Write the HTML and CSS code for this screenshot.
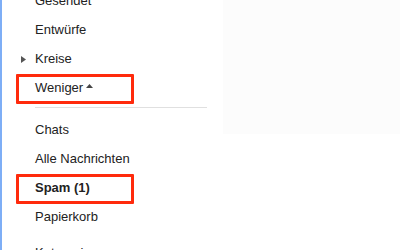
FILE: index.html
```html
<!DOCTYPE html>
<html>
<head>
<meta charset="utf-8">
<link rel="stylesheet" href="styles.css">
</head>
<body>
<div class="page">
  <div class="stripe"></div>
  <nav class="nav">
    <div class="item">Gesendet</div>
    <div class="item">Entwürfe</div>
    <div class="item"><svg class="expand" width="5" height="7" viewBox="0 0 5 7"><path d="M0 0L5 3.5L0 7Z" fill="#555"/></svg>Kreise</div>
    <div class="item marked">Weniger<svg class="caret" width="7" height="4" viewBox="0 0 7 4"><path d="M0 4L3.5 0L7 4Z" fill="#444"/></svg></div>
    <div class="sep"></div>
    <div class="item">Chats</div>
    <div class="item">Alle Nachrichten</div>
    <div class="item marked bold">Spam (1)</div>
    <div class="item">Papierkorb</div>
    <div class="item section">Kategorien</div>
  </nav>
  <div class="main">
    <div class="panel"></div>
  </div>
</div>
</body>
</html>
```
FILE: styles.css
```css
html, body {
  margin: 0;
  padding: 0;
  background: #fff;
  overflow: hidden;
}
.page {
  display: flex;
  width: 400px;
  height: 250px;
  overflow: hidden;
  font-family: "Liberation Sans", Arial, sans-serif;
  font-size: 13px;
  color: #222;
}
.stripe {
  width: 2px;
  flex: none;
  background: #7eaef6;
}
.nav {
  width: 221px;
  flex: none;
  margin-top: -14px;
}
.item {
  position: relative;
  height: 29px;
  line-height: 29px;
  padding-left: 33px;
  white-space: nowrap;
}
.section {
  margin-top: 7px;
}
.bold {
  font-weight: bold;
}
.expand {
  margin-left: -14px;
  margin-right: 9px;
  vertical-align: 0px;
}
.caret {
  margin-left: 3px;
  vertical-align: 4px;
}
.marked::after {
  content: "";
  position: absolute;
  left: 14px;
  top: 1px;
  width: 112px;
  height: 24px;
  border: 3px solid #ff2a0c;
  border-radius: 1px;
}
.sep {
  height: 1px;
  background: #e0e0e0;
  margin: 5px 16px 7px 33px;
}
.main {
  flex: 1;
}
.panel {
  height: 134px;
  background: #fcfcfc;
}
```
